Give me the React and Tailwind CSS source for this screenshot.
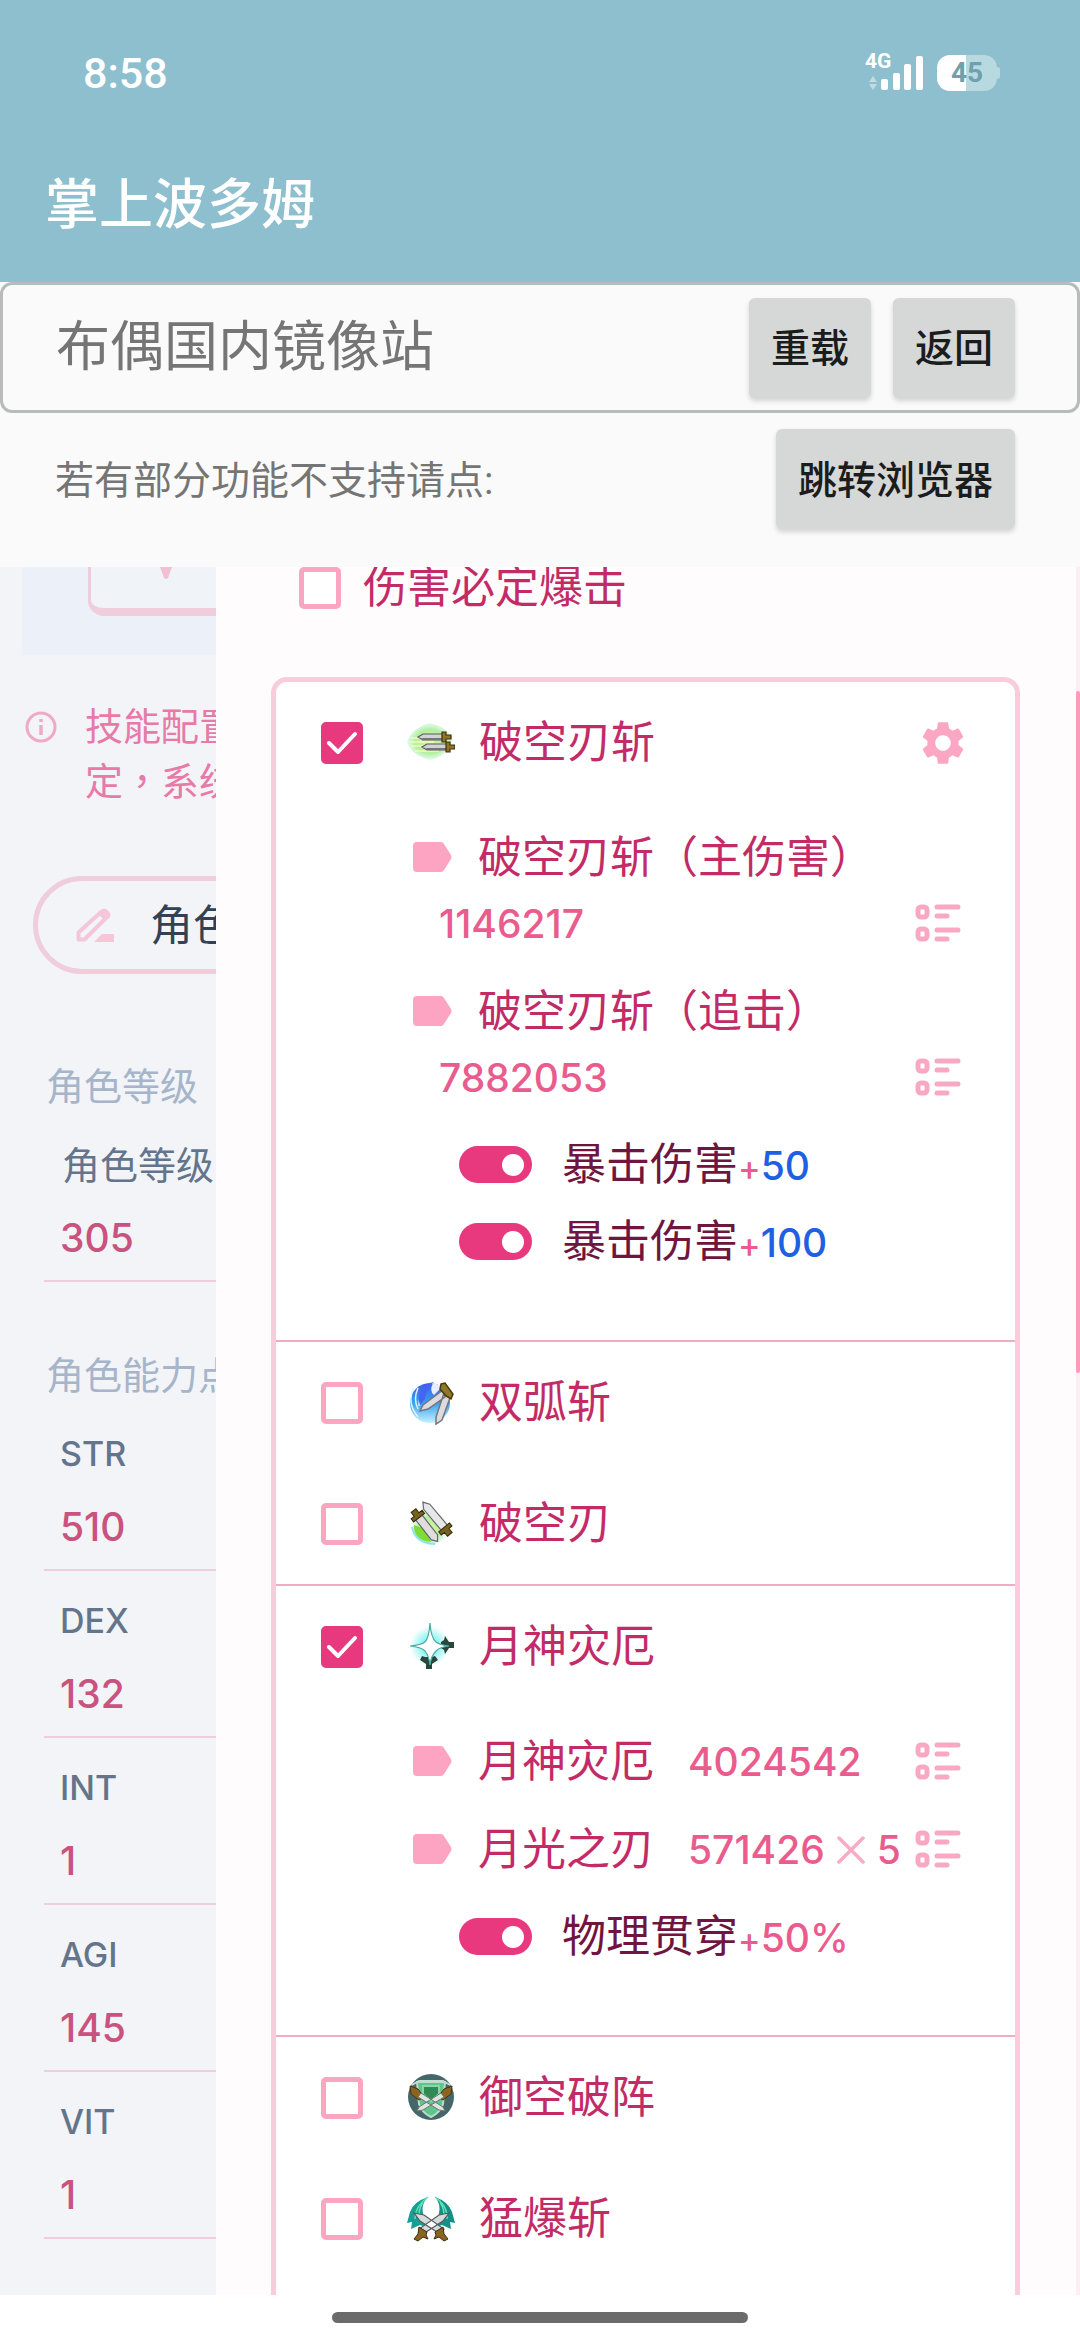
import { useState } from "react";

const groups = [
   [
      {
         name: "破空刃斩",
         icon: "gale",
         checked: true,
         setting: true,
         results: [
            { label: "破空刃斩（主伤害）", value: "1146217" },
            { label: "破空刃斩（追击）", value: "7882053" },
         ],
         buffs: [
            { label: "暴击伤害", value: "50", constant: true },
            { label: "暴击伤害", value: "100", constant: true },
         ],
      },
   ],
   [
      { name: "双弧斩", icon: "arc" },
      { name: "破空刃", icon: "blade" },
   ],
   [
      {
         name: "月神灾厄",
         icon: "star",
         checked: true,
         results: [
            { label: "月神灾厄", value: "4024542" },
            { label: "月光之刃", value: "571426", times: "5" },
         ],
         buffs: [{ label: "物理贯穿", value: "50%" }],
      },
   ],
   [
      { name: "御空破阵", icon: "shield" },
      { name: "猛爆斩", icon: "wings" },
   ],
];

const stats = [
   { name: "STR", value: "510" },
   { name: "DEX", value: "132" },
   { name: "INT", value: "1" },
   { name: "AGI", value: "145" },
   { name: "VIT", value: "1" },
];

const StatusBar = () => {
   return (
      <div className="flex items-center justify-between pt-12 pl-[83px] pr-20 text-white">
         <span className="font-['Roboto'] text-[43px] leading-[50px] font-medium">
            8:58
         </span>
         <div className="flex items-center gap-3">
            <div className="relative">
               <svg className="w-[60px] h-9" viewBox="0 0 60 36" fill="currentColor">
                  <path d="M8 21l4 6H4zM8 35l4-6H4z" opacity="0.45" />
                  <rect x="16" y="24" width="7" height="11" rx="2" />
                  <rect x="28" y="18" width="7" height="17" rx="2" />
                  <rect x="39" y="9" width="7" height="26" rx="2" />
                  <rect x="51" y="1" width="7" height="34" rx="2" />
               </svg>
               <span className="absolute left-0 -top-1 font-['Roboto'] text-[21px] leading-5 font-bold">
                  4G
               </span>
            </div>
            <div className="flex items-center">
               <div className="flex items-center justify-center w-[60px] h-9 rounded-[13px] bg-linear-to-r from-white from-48% to-[#b9d9e1] to-48% font-['Roboto'] text-[28px] leading-9 font-bold text-[#6fa0ae]">
                  45
               </div>
               <div className="w-[3px] h-3 rounded-r-full bg-[#b9d9e1]"></div>
            </div>
         </div>
      </div>
   );
};

const GreyButton = ({ children }) => {
   return (
      <button
         type="button"
         className="h-[100px] px-[22px] pt-1 rounded-md bg-[#d6d8d7] text-[39px] font-medium text-[#1b1c1c] shadow-[0_3px_5px_rgba(0,0,0,0.16)]"
      >
         {children}
      </button>
   );
};

const Field = ({ id, name, value, wide }) => {
   return (
      <div className="ml-11 pt-[23px] w-80 border-b-2 border-[#efcddb]">
         <label
            htmlFor={id}
            className={
               wide
                  ? "block pl-[18px] text-[38px] leading-[54px] pb-[2px] text-[#64748b]"
                  : "block pl-4 text-[34px] leading-[54px] pb-[2px] font-medium text-[#64748b]"
            }
         >
            {name}
         </label>
         <input
            id={id}
            type="text"
            defaultValue={value}
            className="block w-full h-[86px] pl-4 text-[39px] font-medium text-[#c9527f] bg-transparent outline-none"
         />
      </div>
   );
};

const CharacterPanel = () => {
   return (
      <aside className="w-1/5 shrink-0 overflow-hidden whitespace-nowrap bg-[#f2f4f8]">
         <div className="ml-[22px] h-[88px] bg-[#ebf0f9]">
            <div className="ml-[66px] w-80 h-[49px] rounded-bl-2xl border-l-3 border-b-8 border-[#efcddb] bg-[#f0f3f8]">
               <svg className="ml-[69px] w-3 h-3" viewBox="0 0 12 12" fill="#f3bfd2">
                  <path d="M0 0h12L8 11q-2 2-4 0z" />
               </svg>
            </div>
         </div>

         <div className="flex mt-11 ml-[25px]">
            <svg
               className="mt-3 w-8 h-8 shrink-0"
               viewBox="0 0 32 32"
               fill="none"
               stroke="#f0aac6"
               strokeWidth="3"
            >
               <circle cx="16" cy="16" r="14" />
               <path d="M16 14v10M16 8v3" strokeWidth="3.5" />
            </svg>
            <p className="ml-7 text-[38px] leading-[55px] text-[#e87aa8] font-['Inter','Noto_Sans_CJK_TC',sans-serif]">
               技能配置
               <br />
               定，系统
            </p>
         </div>

         <button
            type="button"
            className="flex items-center mt-[67px] ml-[33px] pl-[38px] w-80 h-[98px] rounded-full border-5 border-[#efcddb] text-[43px] text-[#334155]"
         >
            <svg className="w-[38px] h-[34px]" viewBox="0 0 38 34">
               <path
                  d="M2.5 31.5v-7L25 4q3-2.500 5.500 0 2.500 3 0 5.500L8.500 31.500z"
                  fill="none"
                  stroke="#f3c6d8"
                  strokeWidth="4"
                  strokeLinejoin="round"
               />
               <path d="M22 6l5-5q3-1 6 3t0 6l-4 3zM18 34l8-8h12v8z" fill="#f3c6d8" />
            </svg>
            <span className="ml-9">角色配置</span>
         </button>

         <h2 className="mt-[85px] ml-[46px] pb-[2px] text-[38px] leading-[54px] text-[#a6b5c9]">
            角色等级
         </h2>
         <Field id="level" name="角色等级" value="305" wide />

         <h2 className="mt-[66px] ml-[46px] pb-[2px] text-[38px] leading-[54px] text-[#a6b5c9]">
            角色能力点
         </h2>
         {stats.map((stat) => (
            <Field key={stat.name} id={stat.name} name={stat.name} value={stat.value} />
         ))}
      </aside>
   );
};

const CheckBox = ({ id, defaultChecked }) => {
   const [checked, setChecked] = useState(!!defaultChecked);

   return (
      <span className="relative w-[42px] h-[42px] shrink-0">
         <input
            id={id}
            type="checkbox"
            checked={checked}
            onChange={() => setChecked(!checked)}
            className="block w-[42px] h-[42px] appearance-none rounded-[5px] border-5 border-[#fba6c0] bg-white checked:border-[#e8397f] checked:bg-[#e8397f]"
         />
         {checked && (
            <svg
               className="absolute inset-0 pointer-events-none"
               viewBox="0 0 42 42"
               fill="none"
               stroke="white"
               strokeWidth="4"
               strokeLinecap="round"
               strokeLinejoin="round"
            >
               <path d="M8 21l9 9L34 12" />
            </svg>
         )}
      </span>
   );
};

// blade points left, hilt on the right
const Sword = ({ transform }) => {
   return (
      <g transform={transform}>
         <path d="M-17 0l5-3H9v6h-21z" fill="#d2d3d3" stroke="#5b5860" strokeWidth="1.2" />
         <path d="M-13 1H9v2h-21z" fill="#77757c" />
         <path d="M7-5h4v3h5v4h-5v3H7z" fill="#927224" stroke="#3c3010" strokeWidth="1.2" />
      </g>
   );
};

const SkillIcon = ({ name }) => {
   return (
      <svg className="w-12 h-12 shrink-0" viewBox="0 0 48 48">
         <defs>
            <radialGradient id={`${name}-green`}>
               <stop offset="0" stopColor="#d6f59c" />
               <stop offset="0.65" stopColor="#b5efa0" />
               <stop offset="1" stopColor="#b8f5cc" stopOpacity="0.4" />
            </radialGradient>
            <linearGradient id={`${name}-blue`} x1="0" y1="0" x2="0" y2="1">
               <stop offset="0" stopColor="#3d5cf0" />
               <stop offset="0.5" stopColor="#35a3ee" />
               <stop offset="1" stopColor="#c7f0ff" />
            </linearGradient>
            <radialGradient id={`${name}-glow`}>
               <stop offset="0.2" stopColor="#67f0ea" />
               <stop offset="1" stopColor="#67f0ea" stopOpacity="0" />
            </radialGradient>
         </defs>
         {name === "gale" && (
            <>
               <path d="M0 24Q4 11 22 5q18 3 24 17-6 16-23 20Q4 37 0 24z" fill={`url(#${name}-green)`} />
               <path d="M4 20h26M3 24h24M4 28h22M8 33h24" stroke="#effcbd" strokeWidth="1.5" />
               <Sword transform="translate(28 19)" />
               <Sword transform="translate(32 29)" />
            </>
         )}
         {name === "arc" && (
            <>
               <circle cx="23" cy="25" r="20" fill={`url(#${name}-blue)`} />
               <path d="M6 11Q0 26 11 39M11 10q-5 11 0 21M27 4q-15 7-15 24" stroke="#dff4ff" strokeWidth="1.5" fill="none" />
               <path d="M14 12q4-7 13-8-8 6-9 17l-5 6q-3-8 1-15z" fill="#4763f2" />
               <path d="M26 5l10 3-9 9q-5-4-1-12z" fill="#e8eeff" />
               <path d="M36 12L16 27l-3 6 8-2 17-12zM37 15l-8 24 0 7 6-4 9-25z" fill="#dcdce0" stroke="#77747c" strokeWidth="1.5" />
               <path d="M34 6l4-1 8 11-2 5-5-3-6-7z" fill="#8c7826" stroke="#463911" strokeWidth="1.5" />
            </>
         )}
         {name === "blade" && (
            <>
               <circle cx="23" cy="29" r="17" fill={`url(#${name}-green)`} />
               <path d="M7 26q-1 16 17 17l-6-13z" fill="#7edc35" />
               <path d="M5 28q3 16 23 17" fill="none" stroke="#8fe5e5" strokeWidth="2" />
               <g transform="translate(17 25) rotate(232)">
                  <path d="M-22 0l5-4H9v8h-26z" fill="#dededf" stroke="#69666c" strokeWidth="1.2" />
                  <path d="M8-7h4v4h5v6h-5v4H8z" fill="#76611d" stroke="#332a0e" />
               </g>
               <g transform="translate(30 20) rotate(50)">
                  <path d="M-22 0l6-4H12v8h-28z" fill="#e7e7e9" stroke="#69666c" strokeWidth="1.2" />
                  <path d="M11-7h4v4h5v6h-5v4h-4z" fill="#76611d" stroke="#332a0e" />
               </g>
            </>
         )}
         {name === "star" && (
            <>
               <circle cx="23" cy="24" r="20" fill={`url(#${name}-glow)`} />
               <path d="M34 20l3-2 1-4 4 6h5v6h-5l-4 6-1-4-3-2zM18 35l-3-1-2 4 6 4v5h6v-5l6-4-3-4-3 1z" fill="#29463d" />
               <path d="M23 1q1 15 6 19 4 3 13 4-9 1-13 5-5 5-6 14-1-9-5-14-4-4-15-5 11-1 15-4 4-4 5-19z" fill="white" stroke="#4aa9a4" strokeWidth="1.2" />
            </>
         )}
         {name === "shield" && (
            <>
               <circle cx="24" cy="24" r="23" fill="#32565a" opacity="0.9" />
               <path d="M10 9h28l-2 22q-3 9-12 13-9-4-12-13z" fill="#5fc58a" stroke="#b9dccb" strokeWidth="2" />
               <path d="M16 13h16v8l-8 7-8-7z" fill="#2f8a54" stroke="#8fd2ab" strokeWidth="2" />
               <path d="M3 13l8 3 6 8-5 3-8-6zM45 13l-8 3-6 8 5 3 8-6z" fill="#8c6420" stroke="#47330e" />
               <path d="M14 20l22 14 2 4-6-1-21-13zM34 20L12 34l-2 4 6-1 21-13z" fill="#dfe4e1" stroke="#6d7571" />
               <path d="M5 12l7-4h24l7 4" fill="none" stroke="#c6dbd4" strokeWidth="2" />
            </>
         )}
         {name === "wings" && (
            <>
               <path d="M21 3Q6 8 3 18L0 29l5-1-1 7 9-4 6 2-3-14q-2-9 5-16z" fill="#179f95" />
               <path d="M28 3q14 5 17 15l3 11-5-1 1 7-9-4-6 2 3-14q2-9-4-16z" fill="#139188" />
               <path d="M21 3Q8 12 8 25M16 8q-6 9-3 19M28 3q13 9 12 22M33 8q6 9 3 19" fill="none" stroke="#5ee0b6" strokeWidth="1.5" />
               <path d="M7 19l10 2 20 14-4 5-20-13zM42 19l-10 2-20 14 4 5 20-13z" fill="#d5dada" stroke="#535b5c" strokeWidth="1.2" />
               <path d="M12 33l8 5-1 3 2 4-5-2-5 4-4-2 4-5zM36 33l-8 5 1 3-2 4 5-2 5 4 4-2-4-5z" fill="#8a651f" stroke="#3d2d10" />
            </>
         )}
      </svg>
   );
};

const ResultRow = ({ result }) => {
   return (
      <li className="flex items-end py-[11px] pl-[129px] pr-[54px]">
         <div className="flex flex-wrap flex-1 leading-[66px]">
            <span className="flex items-center ml-2 text-[44px] text-[#c32b67]">
               <svg className="mr-[26px] w-[39px] h-[30px]" viewBox="0 0 39 30" fill="#fda4c2">
                  <path d="M4 0h24q2 0 3 2l7 11q1 2 0 4l-7 11q-1 2-3 2H4q-4 0-4-4V4q0-4 4-4z" />
               </svg>
               {result.label}
            </span>
            <span className="flex items-center ml-[34px] pt-[2px] leading-[64px] text-[39px] font-medium text-[#e95c8d]">
               {result.value}
               {result.times && (
                  <>
                     <svg
                        className="mx-3 w-7 h-7"
                        viewBox="0 0 28 28"
                        stroke="#f7abc4"
                        strokeWidth="3.5"
                        strokeLinecap="round"
                     >
                        <path d="M2 2l24 24M26 2L2 26" />
                     </svg>
                     {result.times}
                  </>
               )}
            </span>
         </div>
         <button type="button" aria-label="详情" className="flex items-center h-[66px]">
            <svg
               className="w-[46px] h-[38px]"
               viewBox="0 0 46 38"
               fill="none"
               stroke="#f9a8c4"
               strokeWidth="5"
               strokeLinecap="round"
            >
               <rect x="3" y="3" width="9" height="10" rx="3" />
               <rect x="3" y="25" width="9" height="10" rx="3" />
               <path d="M22 3h21M22 12h10M22 26h21M22 35h10" />
            </svg>
         </button>
      </li>
   );
};

const BuffRow = ({ id, buff }) => {
   return (
      <li className="flex items-center h-[77px] pl-[183px]">
         <input
            id={id}
            type="checkbox"
            role="switch"
            defaultChecked
            className="flex items-center justify-end w-[73px] h-[37px] px-2 appearance-none rounded-full bg-[#f7c6d7] checked:bg-[#e8397f] before:block before:w-[22px] before:h-[22px] before:rounded-full before:bg-white"
         />
         <label htmlFor={id} className="flex items-baseline ml-[30px] pb-[2px] text-[44px] text-[#6f153f]">
            {buff.label}
            <span className="text-[34px] font-medium text-[#e95c8d]">+</span>
            <span
               className={
                  buff.constant
                     ? "text-[39px] font-medium text-[#1f60e3]"
                     : "text-[39px] font-medium text-[#e95c8d]"
               }
            >
               {buff.value}
            </span>
         </label>
      </li>
   );
};

const Skill = ({ skill }) => {
   return (
      <div>
         <div className="flex items-center h-[121px] pl-[45px] pr-[50px]">
            <CheckBox id={skill.icon} defaultChecked={skill.checked} />
            <label
               htmlFor={skill.icon}
               className="flex items-center flex-1 gap-6 ml-11 pb-[2px] text-[44px] text-[#c32b67]"
            >
               <SkillIcon name={skill.icon} />
               {skill.name}
            </label>
            {skill.setting && (
               <button type="button" aria-label="设置">
                  <svg className="w-[52px] h-[52px] -mr-1" viewBox="0 0 24 24" fill="#fba6c2">
                     <path d="M19.140 12.940c.04-.3.06-.61.06-.94 0-.32-.02-.64-.07-.94l2.030-1.580c.18-.14.23-.41.12-.61l-1.920-3.320c-.12-.22-.37-.29-.59-.22l-2.390.96c-.5-.38-1.030-.7-1.620-.94l-.36-2.540c-.04-.24-.24-.41-.48-.41h-3.840c-.24 0-.43.17-.47.41l-.36 2.540c-.59.24-1.130.57-1.620.94l-2.390-.96c-.22-.08-.47 0-.59.22L2.740 8.870c-.12.21-.08.47.12.61l2.030 1.580c-.05.3-.09.63-.09.94s.02.64.07.94l-2.030 1.580c-.18.14-.23.41-.12.61l1.920 3.320c.12.22.37.29.59.22l2.390-.96c.5.38 1.030.7 1.620.94l.36 2.540c.05.24.24.41.48.41h3.840c.24 0 .44-.17.47-.41l.36-2.540c.59-.24 1.130-.56 1.620-.94l2.390.96c.22.08.47 0 .59-.22l1.920-3.320c.12-.22.07-.47-.12-.61l-2.010-1.580zM12 15.600c-1.980 0-3.600-1.620-3.600-3.600s1.620-3.600 3.600-3.600 3.600 1.620 3.600 3.600-1.620 3.600-3.600 3.600z" />
                  </svg>
               </button>
            )}
         </div>

         {skill.results && (
            <ul className="pt-[10px]">
               {skill.results.map((result) => (
                  <ResultRow key={result.label} result={result} />
               ))}
            </ul>
         )}
         {skill.buffs && (
            <ul className="pt-[5px] pb-[60px]">
               {skill.buffs.map((buff) => (
                  <BuffRow key={buff.value} id={`${skill.icon}-${buff.value}`} buff={buff} />
               ))}
            </ul>
         )}
      </div>
   );
};

const App = () => {
   return (
      <div className="flex flex-col h-screen overflow-hidden bg-white font-['Inter','Noto_Sans_CJK_SC',sans-serif]">
         <header className="h-[282px] shrink-0 bg-[#8dbfce] font-['Roboto','Noto_Sans_CJK_SC',sans-serif]">
            <StatusBar />
            <h1 className="mt-[74px] ml-[45px] text-[54px] leading-[68px] font-medium text-white">
               掌上波多姆
            </h1>
         </header>

         <section className="h-[285px] shrink-0 bg-[#fafafa] font-['Roboto','Noto_Sans_CJK_SC',sans-serif]">
            <div className="flex items-center h-[131px] pl-[53px] pr-[62px] gap-[22px] rounded-xl border-3 border-[#b8bbba]">
               <span className="flex-1 text-[54px] text-[#757575]">布偶国内镜像站</span>
               <GreyButton>重载</GreyButton>
               <GreyButton>返回</GreyButton>
            </div>
            <div className="flex items-center justify-between h-[132px] pl-[55px] pr-[65px]">
               <span className="pt-1 text-[39px] text-[#757575]">若有部分功能不支持请点:</span>
               <GreyButton>跳转浏览器</GreyButton>
            </div>
         </section>

         <div className="flex flex-1 min-h-0">
            <CharacterPanel />
            <main className="flex-1 overflow-hidden pl-[55px] pr-14 bg-[#fffcfd]">
               <div className="flex items-center h-[42px] pl-7 gap-[22px]">
                  <CheckBox id="critical" />
                  <label htmlFor="critical" className="pb-[2px] text-[44px] text-[#c32b67]">
                     伤害必定爆击
                  </label>
               </div>
               <div className="mt-[68px] pb-20 rounded-2xl border-5 border-[#f9ccdb] bg-white divide-y-2 divide-[#f1acc4]">
                  {groups.map((group) => (
                     <div key={group[0].name}>
                        {group.map((skill) => (
                           <Skill key={skill.name} skill={skill} />
                        ))}
                     </div>
                  ))}
               </div>
            </main>
            <div className="w-1 shrink-0 bg-[#fdeef4]">
               <div className="mt-[124px] h-[682px] rounded-full bg-[#fb9cba]"></div>
            </div>
         </div>

         <footer className="flex justify-center items-start h-11 shrink-0 bg-white">
            <div className="mt-[17px] w-[416px] h-[11px] rounded-full bg-[#6b6b6b]"></div>
         </footer>
      </div>
   );
};

export default App;
